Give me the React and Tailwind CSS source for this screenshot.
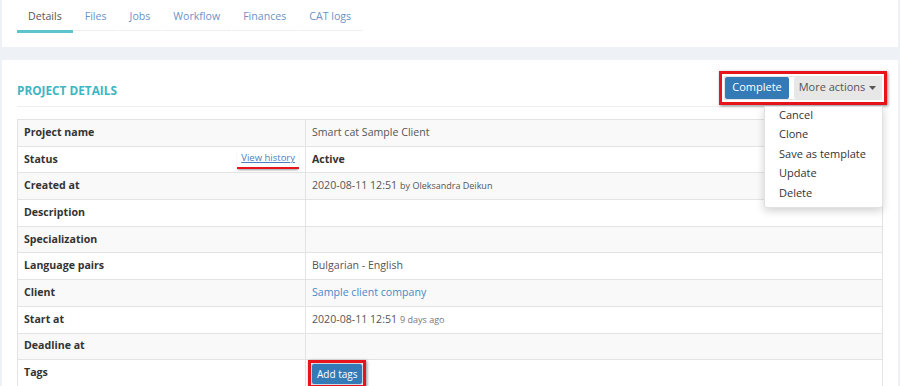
import React from "react";

const tabs = ["Details", "Files", "Jobs", "Workflow", "Finances", "CAT logs"];

const menuItems = ["Cancel", "Clone", "Save as template", "Update", "Delete"];

const Row = ({ label, striped, extra, children }) => (
  <div
    className={`flex h-[26.7px] border-b border-[#e3e3e3] ${
      striped ? "bg-[#f9f9f9]" : "bg-white"
    }`}
  >
    <div className="w-[288px] shrink-0 border-r border-[#e3e3e3] px-[6px] flex items-center justify-between font-bold text-[#333]">
      <span>{label}</span>
      {extra}
    </div>
    <div className="flex-1 px-[6px] flex items-center text-[#555] whitespace-nowrap">{children}</div>
  </div>
);

export default function App() {
  return (
    <div
      className="w-[900px] h-[386px] overflow-hidden bg-[#eef1f5] text-[10.6px]"
      style={{ fontFamily: '"Open Sans", "Liberation Sans", sans-serif' }}
    >
      {/* tabs card */}
      <div className="mx-[2px] h-[47px] bg-white px-[15px] pt-[1px]">
        <div className="flex">
          {tabs.map((t, i) => (
            <div
              key={t}
              className={`mr-[1px] px-[11px] pt-[7px] pb-[6px] leading-[16px] text-[10.6px] ${
                i === 0
                  ? "border-b-[3px] border-[#5ec4cb] text-[#555]"
                  : "border-b-[1px] border-[#eeeeee] text-[#6a93c6] mb-[2px]"
              }`}
            >
              {t}
            </div>
          ))}
        </div>
      </div>

      {/* details card */}
      <div className="mx-[2px] mt-[13px] bg-white px-[15px] pt-[10px] h-[400px]">
        <div className="flex items-center justify-between border-b border-[#eeeeee] h-[37px] pb-[1px]">
          <h2 className="text-[11.8px] font-bold text-[#3db6c2] pt-[7px]">PROJECT DETAILS</h2>
          <div className="relative -mr-[4px]">
            <div className="border-[3px] border-[#e8141b] p-[3px] shadow-[1px_1px_3px_rgba(0,0,0,0.45)]">
              <div className="flex gap-[5px] ring-1 ring-[#e6e6e6]">
                <button className="h-[22px] w-[64px] rounded-[2px] bg-[#337ab7] text-white text-[11px]">
                  Complete
                </button>
                <button className="h-[22px] w-[87px] rounded-[2px] bg-[#e7e7e7] text-[#555] text-[11px] flex items-center justify-center gap-[4px]">
                  More actions
                  <svg width="7" height="4" viewBox="0 0 7 4">
                    <path d="M0 0h7L3.5 4z" fill="#555" />
                  </svg>
                </button>
              </div>
            </div>
            <div className="absolute right-[4px] top-[35px] z-10 w-[119px] bg-white rounded-b-[3px] border border-[#e2e2e2] shadow-[0_3px_8px_rgba(0,0,0,0.18)] pb-[3px]">
              {menuItems.map((m) => (
                <div key={m} className="px-[14px] h-[19.5px] leading-[16px] text-[11px] text-[#333] whitespace-nowrap">
                  {m}
                </div>
              ))}
            </div>
          </div>
        </div>

        <div className="mt-[12px] border-t border-l border-r border-[#e3e3e3]">
          <Row label="Project name" striped>
            Smart cat Sample Client
          </Row>
          <Row
            label="Status"
            extra={
              <span className="border-b-[2px] border-[#e8141b] px-[4px] pb-[1px] shadow-[0_2px_2px_-1px_rgba(0,0,0,0.4)]">
                <span className="font-normal text-[9.5px] text-[#4a7fc4] underline">View history</span>
              </span>
            }
          >
            <span className="font-bold text-[#333]">Active</span>
          </Row>
          <Row label="Created at" striped>
            2020-08-11 12:51
            <span className="ml-[3px] text-[9px] text-[#555]">by Oleksandra Deikun</span>
          </Row>
          <Row label="Description" />
          <Row label="Specialization" striped />
          <Row label="Language pairs">Bulgarian - English</Row>
          <Row label="Client" striped>
            <span className="text-[#4a88c6]">Sample client company</span>
          </Row>
          <Row label="Start at">
            2020-08-11 12:51
            <span className="ml-[3px] text-[9px] text-[#777]">9 days ago</span>
          </Row>
          <Row label="Deadline at" striped />
          <Row label="Tags">
            <span className="-ml-[4px] mt-[2px] border-[3px] border-[#e8141b] p-[1px] shadow-[1px_1px_3px_rgba(0,0,0,0.45)]">
              <span className="block h-[20px] px-[5px] rounded-[2px] bg-[#337ab7] ring-1 ring-[#cfd8e3] text-white text-[10px] leading-[20px]">
                Add tags
              </span>
            </span>
          </Row>
        </div>
      </div>
    </div>
  );
}
